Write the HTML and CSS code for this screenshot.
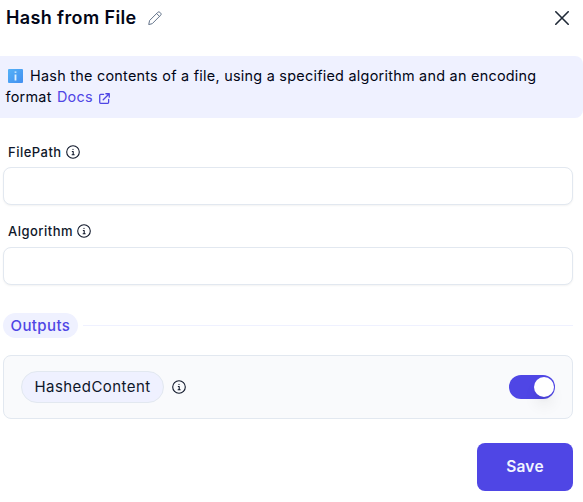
FILE: index.html
```
<!DOCTYPE html>
<html lang="en">
<head>
<meta charset="utf-8">
<title>Hash from File</title>
<link rel="stylesheet" href="styles.css">
</head>
<body>
<svg class="defs" aria-hidden="true">
  <symbol id="info" viewBox="0 0 14 14"><circle cx="7" cy="7" r="6.3"/><path d="M6.3 6.5H7.2V9.7M6.1 9.8H8.2M7 4.2v.2"/></symbol>
</svg>
<header class="header">
  <h1>Hash from File</h1>
  <svg class="pencil" viewBox="0 0 14 14"><path d="M.8 13.2l.8-3.7 8.2-8.2a1.5 1.5 0 0 1 2.1 0l.8.8a1.5 1.5 0 0 1 0 2.1L4.5 12.4zM8.6 2.5l2.9 2.9"/></svg>
  <svg class="close" viewBox="0 0 14 14"><path d="M.8.8l12.4 12.4M13.2.8L.8 13.2"/></svg>
</header>
<div class="notice"><span class="badge"><svg viewBox="0 0 15 14"><defs><linearGradient id="blue" x2="1" y2="1"><stop stop-color="#55b2f7"/><stop offset="1" stop-color="#428ff0"/></linearGradient></defs><rect width="15" height="14" rx="1" fill="url(#blue)"/><path d="M7.5 2.6v1.2M7.5 5.5v6"/></svg></span>Hash the contents of a file, using a specified algorithm and an encoding format <a>Docs<svg viewBox="0 0 12 12"><path d="M5 1.5H1.8a1 1 0 0 0-1 1v7.7a1 1 0 0 0 1 1h7.7a1 1 0 0 0 1-1V7M7.5.8h3.7v3.7M11.2.8L4.6 7.4"/></svg></a></div>
<form class="form">
  <div class="field">
    <label for="path">FilePath<svg class="info"><use href="#info"/></svg></label>
    <input id="path" type="text">
  </div>
  <div class="field">
    <label for="algo">Algorithm<svg class="info"><use href="#info"/></svg></label>
    <input id="algo" type="text">
  </div>
  <div class="divider"><span>Outputs</span></div>
  <div class="output">
    <span class="pill">HashedContent</span><svg class="info"><use href="#info"/></svg>
    <span class="toggle"></span>
  </div>
  <button class="save" type="button">Save</button>
</form>
</body>
</html>
```

FILE: styles.css
```
* { box-sizing: border-box; }
body { margin: 0; background: #fff; color: #0f172a; font-family: Inter, sans-serif; }
svg { fill: none; stroke: currentColor; stroke-linecap: round; stroke-linejoin: round; }
.defs { display: none; }
.header { display: flex; align-items: center; height: 36px; padding: 0 14px 0 6px; }
h1 { margin: 0; color: #020617; font-size: 18px; font-weight: 600; line-height: 28px; letter-spacing: .38px; }
.pencil { width: 14px; height: 14px; margin: -1px 0 0 11px; color: #64748b; }
.close { width: 14px; height: 14px; margin-left: auto; color: #1f2937; stroke-width: 1.6; }
.notice { height: 62px; margin: 20px 0 0; padding: 9px 5.5px; background: #eff1ff; border-radius: 0 8px 8px 0; color: #020617; font-size: 14.4px; line-height: 21px; letter-spacing: .26px; }
.badge { display: inline-block; width: 24.5px; padding-left: 2.5px; }
.badge svg { display: block; width: 15px; height: 14px; margin-bottom: -2px; stroke: #e0f2fe; stroke-width: 1.8; stroke-linecap: butt; }
.badge rect { stroke: none; }
.notice a { margin-left: 1px; color: #4f46e5; }
.notice a svg { width: 11px; height: 11px; margin-left: 6px; vertical-align: -2px; stroke-width: 1.4; }
.form { display: flex; flex-direction: column; padding: 24px 10px 0 3px; }
.field { height: 80px; }
label { display: flex; align-items: center; height: 20px; padding-left: 5px; font-size: 13px; font-weight: 500; letter-spacing: .48px; }
.field + .field label { height: 18px; }
.field + .field input { margin-top: 7px; }
.info { width: 14px; height: 14px; margin-left: 4px; stroke-width: 1.1; }
input { display: block; width: 100%; height: 38px; margin-top: 5px; border: 1px solid #e2e8f0; border-radius: 8px; background: #fff; box-shadow: 0 1px 2px rgba(0, 0, 0, .05); }
.divider { display: flex; align-items: center; gap: 5px; height: 25px; margin-top: 11px; }
.divider::after { content: ""; flex: 1; height: 1px; background: #eff1ff; }
.divider span { padding: 0 7.5px; border-radius: 13px; background: #eff1ff; color: #4f46e5; font-size: 15px; font-weight: 500; line-height: 25px; letter-spacing: .4px; }
.output { display: flex; align-items: center; height: 64px; margin-top: 17px; padding: 0 17px; border: 1px solid #e2e8f0; border-radius: 8px; background: #f9fafc; }
.pill { height: 32px; padding: 0 12.5px; border: 1px solid #e2e8f0; border-radius: 16px; background: #eff1ff; font-size: 15px; line-height: 30px; letter-spacing: .44px; }
.output .info { margin-left: 8px; }
.toggle { display: flex; align-items: center; justify-content: flex-end; width: 46px; height: 24px; margin-left: auto; padding: 1px; border-radius: 12px; background: #4f46e5; }
.toggle::after { content: ""; width: 20px; height: 20px; border-radius: 50%; background: #fff; box-shadow: 0 10px 15px -3px rgba(0, 0, 0, .1), 0 4px 6px -4px rgba(0, 0, 0, .1); }
.save { align-self: flex-end; width: 96px; height: 48px; margin-top: 24px; padding: 0 0 2px; border: 0; border-radius: 8px; background: #4f46e5; color: #f1f5ff; font: 600 15.5px Inter, sans-serif; letter-spacing: .2px; }
```
